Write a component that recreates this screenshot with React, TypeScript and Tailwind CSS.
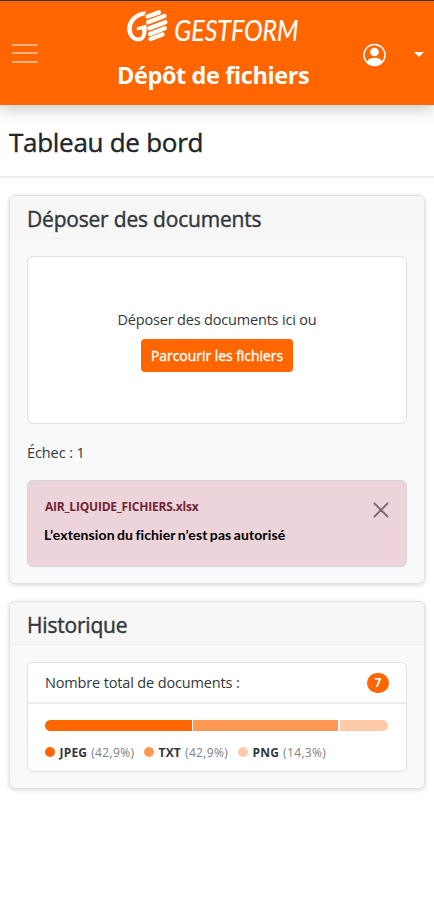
import React from "react";

const ui = "font-['Open_Sans','Noto_Sans',sans-serif]";

function Logo() {
  return (
    <svg width="42" height="34" viewBox="0 0 42 34" fill="none" className="block shrink-0">
      <path d="M19 2.500C12 1.800 1 8 0.200 18.500C-0.200 27 5 32.300 11.500 32.300C17.500 32.300 20.500 26.500 19.500 15.500L9.500 18.500L10 21.500L15 20.500C15.500 26 14.500 28.600 11.800 28.600C7.500 28.600 4.600 24.500 5 19C5.500 12 11 7.500 17.300 6.500Z" fill="#fff" />
      <path d="M20.500 7.500L32 3.400M21 13.200L37.500 7M22.300 19.300L38.300 13.200M23 25L37.800 19.300M23.500 30L35.500 25.500" stroke="#fff" strokeWidth="4.300" strokeLinecap="round" />
    </svg>
  );
}

function Card({ title, className, children }: { title: string; className: string; children: React.ReactNode }) {
  return (
    <section className={`mx-[9px] flex flex-col rounded-[6px] border border-[#dfe1e3] bg-[#f8f9fb] shadow-[0_1px_4px_rgba(0,0,0,0.16)] ${className}`}>
      <h2 className="flex h-[43px] shrink-0 items-center rounded-t-[5px] border-b border-[#eef0f2] bg-[#f7f7f7] pt-[6px] pl-[17px] text-[21px] font-medium tracking-[-0.2px] text-[#32373c] [-webkit-text-stroke:0.4px_#32373c]">
        {title}
      </h2>
      {children}
    </section>
  );
}

function Legend({ color, name, value, className }: { color: string; name: string; value: string; className: string }) {
  return (
    <span className={`flex items-center whitespace-nowrap text-[12px] ${className}`}>
      <span className={`mr-[4.5px] mb-[2px] size-[10px] shrink-0 rounded-full ${color}`} />
      <b className="mr-1 font-bold tracking-[0.2px] text-[#32373c]">{name}</b>
      <span className="tracking-[0.35px] text-[#7b8086]">({value})</span>
    </span>
  );
}

export default function App() {
  return (
    <div className={`h-[905px] w-[434px] overflow-hidden bg-white text-[#32373c] ${ui}`}>
      <header className="flex h-[105px] justify-between border-t border-[#333] bg-[#ff6600] shadow-[0_6px_14px_rgba(0,0,0,0.18)]">
        <div className="flex w-[117px] flex-col gap-[6.500px] pt-[42.500px] pl-3">
          <span className="h-[2px] w-[26px] rounded bg-[#ffb27f]" />
          <span className="h-[2px] w-[26px] rounded bg-[#ffb27f]" />
          <span className="h-[2px] w-[26px] rounded bg-[#ffb27f]" />
        </div>
        <div className="w-[192px] pt-2">
          <div className="flex h-[34px] items-start pl-[10px]">
            <Logo />
            <span className="origin-left scale-x-[0.89] pt-[3px] pl-1.5 font-['Lato',sans-serif] text-[28px] leading-[36px] text-white italic [-webkit-text-stroke:0.2px_#fff]">GESTFORM</span>
          </div>
          <h1 className="mt-[8px] h-[48px] text-[23.5px] leading-[48px] font-bold tracking-[-0.4px] whitespace-nowrap text-white">Dépôt de fichiers</h1>
        </div>
        <div className="flex w-[125px] items-start pt-[42px] pl-[54px]">
          <svg width="24" height="24" viewBox="0 0 24 24">
            <circle cx="11.500" cy="12" r="10.500" fill="none" stroke="#fff" strokeWidth="1.500" />
            <circle cx="11.500" cy="9" r="4.300" fill="#fff" />
            <path d="M3.800 18.500C5.500 15.500 8.500 14.700 11.500 14.700S17.500 15.500 19.200 18.500C15 23.500 8 23.500 3.800 18.500Z" fill="#fff" />
          </svg>
          <svg width="10" height="5" viewBox="0 0 10 5" className="mt-[9px] ml-[27px]"><path d="M0 0H10L5 5Z" fill="#fff" /></svg>
        </div>
      </header>
      <div className="flex h-[73px] items-center border-b-2 border-[#e9edf2] pt-[3px] pl-[9px] text-[26px] font-medium tracking-[-0.28px] text-[#212529] [-webkit-text-stroke:0.4px_#212529]">Tableau de bord</div>
      <Card title="Déposer des documents" className="mt-[17px] h-[389px]">
        <div className="mx-[17px] mt-[17px] flex h-[168px] flex-col items-center rounded-[6px] border border-[#dee1e4] bg-white pt-[53px]">
          <span className="h-[20px] text-[14.5px] leading-[20px] tracking-[-0.18px] whitespace-nowrap">Déposer des documents ici ou</span>
          <button className="mt-[9px] h-[33px] w-[152px] rounded-[4px] bg-[#ff6600] text-[14px] tracking-[-0.05px] whitespace-nowrap text-white [-webkit-text-stroke:0.35px_#fff]">Parcourir les fichiers</button>
        </div>
        <p className="mt-[19px] h-[20px] pl-[17px] text-[14.5px] leading-[20px] tracking-[-0.1px]">Échec : 1</p>
        <div className="mx-[17px] mt-[17px] flex h-[87px] justify-between rounded-[6px] border border-[#d3d3d9] bg-[#ecd4da] pl-[17px]">
          <div className="pt-[16px] whitespace-nowrap">
            <p className="h-[20px] text-[12px] leading-[20px] font-bold tracking-[-0.2px] text-[#722432]">AIR_LIQUIDE_FICHIERS.xlsx</p>
            <p className="mt-[8px] -ml-px h-[20px] font-['Lato',sans-serif] text-[14px] leading-[20px] font-bold tracking-[0.12px] text-black [word-spacing:-1.2px]">L’extension du fichier n’est pas autorisé</p>
          </div>
          <svg width="16" height="16" viewBox="0 0 16 16" className="mt-[21px] mr-[17px]"><path d="M1.500 1.500L14.500 14.500M14.500 1.500L1.500 14.500" stroke="#766a6d" strokeWidth="1.800" strokeLinecap="round" /></svg>
        </div>
      </Card>
      <Card title="Historique" className="mt-[17px] h-[188px]">
        <div className="mx-[17px] mt-[17px] h-[110px] rounded-[6px] border border-[#dee2e6] bg-white">
          <div className="flex h-[41px] items-center justify-between border-b-2 border-[#e9edf1] pt-px pr-[17px] pl-[17px] text-[14.5px]">
            <span className="tracking-[-0.15px] whitespace-nowrap">Nombre total de documents :</span>
            <span className="flex h-[20px] w-[22px] items-center justify-center rounded-full bg-[#ff6600] text-[12px] font-bold text-white">7</span>
          </div>
          <div className="mt-[16px] ml-[17px] flex h-[11px] w-[343px] overflow-hidden rounded-full">
            <span className="w-[147px] bg-[#ff6600]" />
            <span className="ml-px w-[145px] bg-[#ff9854]" />
            <span className="ml-[2px] flex-1 bg-[#ffcaa8]" />
          </div>
          <div className="mt-[12px] flex h-[20px] pl-[17px]">
            <Legend color="bg-[#ff6600]" name="JPEG" value="42,9%" className="w-[99px]" />
            <Legend color="bg-[#ff9854]" name="TXT" value="42,9%" className="w-[94px]" />
            <Legend color="bg-[#ffcaa8]" name="PNG" value="14,3%" className="w-[90px]" />
          </div>
        </div>
      </Card>
    </div>
  );
}
